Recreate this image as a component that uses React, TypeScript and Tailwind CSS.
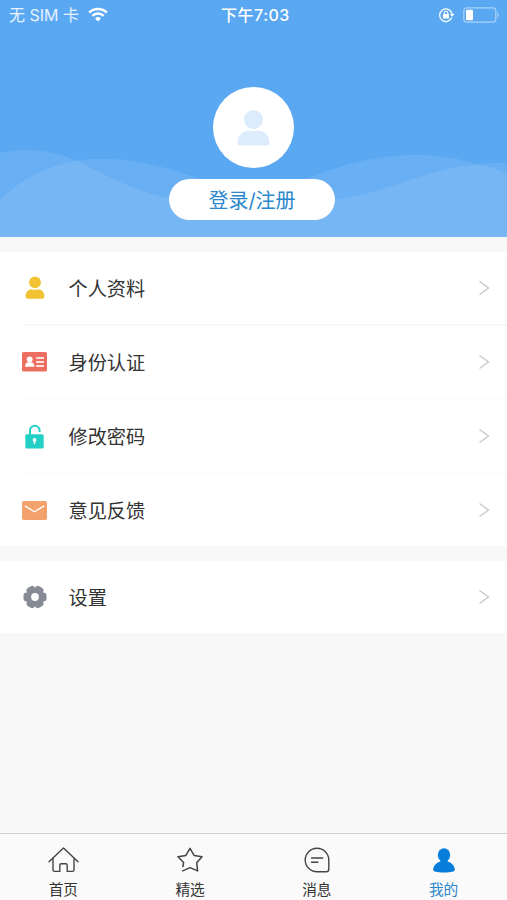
import type { ReactNode } from "react";

const PersonIcon = () => (
  <svg width="20" height="24" viewBox="0 0 20 24" fill="#f1c232">
    <circle cx="10" cy="6.4" r="5.9" />
    <path d="M.6 20.5c0-4.3 2.8-7.3 6-7.3 1.2.7 5.4.7 6.8 0 3.2 0 6 3 6 7.3 0 1.3-.9 2.2-2.2 2.2H2.8C1.5 22.7.6 21.8.6 20.5z" />
  </svg>
);

const IdCardIcon = () => (
  <svg width="25" height="20" viewBox="0 0 25 20">
    <rect width="25" height="19.5" rx="1.5" fill="#ec6f62" />
    <g fill="#fff">
      <circle cx="7.7" cy="7.3" r="2.9" />
      <path d="M3 14.8c0-3 1.6-4.600 3.200-4.600h3c1.600 0 3.200 1.600 3.200 4.600z" />
    </g>
    <path d="M14.2 6h7.8M14.2 10h7.8M14.2 14h7.8" stroke="#fde3df" strokeWidth="1.8" />
  </svg>
);

const LockIcon = () => (
  <svg width="19" height="25" viewBox="0 0 19 25">
    <path d="M5 11V6.5a4.8 4.8 0 0 1 9.6 0V8" fill="none" stroke="#23d0c6" strokeWidth="2" />
    <rect x=".3" y="10.3" width="18.4" height="14.2" rx="1.5" fill="#23d0c6" />
    <circle cx="9.5" cy="16" r="1.9" fill="#fff" />
    <path d="M9.5 16v4.2" stroke="#fff" strokeWidth="1.5" />
  </svg>
);

const MailIcon = () => (
  <svg width="25" height="19" viewBox="0 0 25 19">
    <rect width="25" height="19" rx="1.8" fill="#f4a26c" />
    <path d="M2.8 4.8l9.7 6 9.7-6" fill="none" stroke="#fff" strokeWidth="1.4" />
  </svg>
);

const GearIcon = () => (
  <svg width="24" height="24" viewBox="0 0 24 24" fill="#868a95">
    <circle cx="12" cy="12" r="9.3" />
    <rect x=".5" y="7.5" width="23" height="9" rx="3.2" />
    <rect x=".5" y="7.5" width="23" height="9" rx="3.2" transform="rotate(60 12 12)" />
    <rect x=".5" y="7.5" width="23" height="9" rx="3.2" transform="rotate(120 12 12)" />
    <circle cx="12" cy="12" r="3.9" fill="#fff" />
  </svg>
);

const HomeIcon = () => (
  <svg width="31" height="26" viewBox="0 0 31 26" fill="none" stroke="#444" strokeWidth="1.4" strokeLinecap="round" strokeLinejoin="round">
    <path d="M1 14.8L15.5 1 30 14.8" />
    <path d="M5 11.5v11.3q0 1.6 1.6 1.6h5.2v-6.2q0-1.5 1.5-1.5h4.4q1.5 0 1.5 1.5v6.2h5.2q1.6 0 1.6-1.6V11.5" />
  </svg>
);

const StarIcon = () => (
  <svg width="26" height="26" viewBox="0 0 26 26" fill="none" stroke="#444" strokeWidth="1.5" strokeLinecap="round" strokeLinejoin="round">
    <path d="M5.9 19.5l.7-4L1 9.8l7.9-1.4L13 1.3l4.1 7.1L25 9.8l-5.300 5.900.9 8.200-7.600-3.300-7.200 3.300" />
  </svg>
);

const MessageIcon = () => (
  <svg width="26" height="26" viewBox="0 0 26 26" fill="none" stroke="#444" strokeWidth="1.4" strokeLinecap="round">
    <path d="M13 1.2a11.8 11.8 0 0 0 0 23.6h9.3q2.5 0 2.5-2.5V13A11.8 11.8 0 0 0 13 1.2z" />
    <path d="M7.5 11h11.3M7.5 15.2h6.3" />
  </svg>
);

const MeIcon = () => (
  <svg width="22" height="25" viewBox="0 0 22 25" fill="#087edb">
    <ellipse cx="11" cy="7" rx="6.2" ry="6.7" />
    <path d="M7.5 11h7l.3 2.5c4 1.3 7 4.6 7 8.2 0 2-3.5 2.7-10.8 2.7S.2 23.7.2 21.7c0-3.6 3-6.9 7-8.2z" />
  </svg>
);

const mainItems = [
  { label: "个人资料", icon: <PersonIcon /> },
  { label: "身份认证", icon: <IdCardIcon /> },
  { label: "修改密码", icon: <LockIcon /> },
  { label: "意见反馈", icon: <MailIcon /> },
];

const tabs = [
  { label: "首页", icon: <HomeIcon /> },
  { label: "精选", icon: <StarIcon /> },
  { label: "消息", icon: <MessageIcon /> },
  { label: "我的", icon: <MeIcon />, active: true },
];

function MenuRow({ label, icon }: { label: string; icon: ReactNode }) {
  return (
    <div className="flex h-[72px] items-center pr-[17px] pl-[22px]">
      <div className="flex w-[25px] justify-center">{icon}</div>
      <span className="ml-[21.5px] flex-1 pt-[3px] text-[19.2px] leading-none text-[#333]">{label}</span>
      <svg width="12" height="16" viewBox="0 0 12 16" fill="none" stroke="#c8c8cc" strokeWidth="1.4">
        <path d="M1.5 1.5L10.5 8l-9 6.5" />
      </svg>
    </div>
  );
}

function StatusBar() {
  return (
    <div className="grid h-[30px] grid-cols-3 items-center pr-[7px] pl-[9px] text-white">
      <div className="flex items-center text-[16px] leading-none text-white/85">
        <span className="whitespace-nowrap">无 SIM 卡</span>
        <svg className="-mt-0.5 ml-[9px]" width="20" height="15" viewBox="0 0 20 15" fill="none" stroke="#fff" strokeWidth="2.5">
          <path d="M1.2 5.5a12.5 12.5 0 0 1 17.6 0M4.4 8.9a8 8 0 0 1 11.2 0" />
          <path d="M10 14.5l-3-3a4.3 4.3 0 0 1 6 0z" fill="#fff" stroke="none" />
        </svg>
      </div>
      <span className="pl-0.5 text-center text-[16px] leading-none font-medium tracking-[0.5px] whitespace-nowrap">下午7:03</span>
      <div className="flex items-center justify-end gap-2">
        <svg width="17" height="16" viewBox="0 0 17 16">
          <path d="M13.8 10.5A6.3 6.3 0 1 1 14 6.5" fill="none" stroke="#fff" strokeWidth="1.3" />
          <path d="M11.8 6.8h4.6l-2.2 3z" fill="#fff" />
          <rect x="5" y="7" width="6" height="4.5" rx=".6" fill="#fff" />
          <path d="M6.2 7.500V6a1.800 1.800 0 0 1 3.600 0v1.500" fill="none" stroke="#fff" strokeWidth="1.1" />
        </svg>
        <svg width="37" height="16" viewBox="0 0 37 16">
          <rect x=".8" y=".8" width="32" height="14.4" rx="3" fill="none" stroke="#a9d3fb" strokeWidth="1.2" />
          <rect x="3" y="2.8" width="7" height="10.4" rx="1.2" fill="#fff" />
          <path d="M34.3 5q3 3 0 6z" fill="#a9d3fb" />
        </svg>
      </div>
    </div>
  );
}

export default function App() {
  return (
    <div className="flex h-[900px] w-[507px] flex-col overflow-hidden bg-[#f8f8f8] font-['Inter','Noto_Sans_CJK_SC',sans-serif]">
      <header className="relative h-[237px] bg-[#5ba8f2]">
        <svg className="absolute inset-0" width="507" height="237" viewBox="0 0 507 237" fill="#fff" fillOpacity=".09">
          <path d="M0 153C28 147 57 150 85 165C119 182 143 194 173 199C230 210 294 208 345 198C405 187 436 162 507 163V237H0z" />
          <path d="M0 200C42 159 93 153 144 163C182 170 206 185 250 189C290 187 311 176 340 167C382 153 438 150 478 165C488 166 498 169 507 174V237H0z" />
        </svg>
        <div className="relative">
          <StatusBar />
          <div className="flex flex-col items-center pt-[57px]">
            <div className="flex size-[81px] items-center justify-center rounded-full bg-white">
              <svg width="33" height="36" viewBox="0 0 33 36" fill="#dcecfc">
                <circle cx="16.5" cy="9.5" r="9.5" />
                <path d="M.5 33C.5 25 6 21 12 20.5q4.5 1 9 0C27 21 32.5 25 32.5 33q0 2.5-2.5 2.5H3Q.5 35.5.5 33z" />
              </svg>
            </div>
            <button className="mt-[11px] mr-[3px] h-[41px] w-[166px] rounded-full bg-white pt-0.5 text-[20px] leading-none text-[#2b87cd]">登录/注册</button>
          </div>
        </div>
      </header>

      <section className="mt-[15px] bg-white">
        {mainItems.map((item, i) => (
          <div key={item.label}>
            {i > 0 && <div className={i === 1 ? "ml-6 h-[2px] bg-[#f7f7f7]" : "ml-6 h-[2px] bg-[#fcfcfc]"} />}
            <MenuRow {...item} />
          </div>
        ))}
      </section>

      <section className="mt-[15px] bg-white">
        <MenuRow label="设置" icon={<GearIcon />} />
      </section>

      <nav className="mt-auto grid h-[67px] grid-cols-4 border-t border-[#cfcfcf] bg-[#fafafa]">
        {tabs.map((tab) => (
          <div key={tab.label} className="flex flex-col items-center pt-[13px]">
            <div className="flex h-[26px] items-center">{tab.icon}</div>
            <span className={`mt-[10px] text-[14.7px] leading-none ${tab.active ? "text-[#2b87cd]" : "text-[#333]"}`}>
              {tab.label}
            </span>
          </div>
        ))}
      </nav>
    </div>
  );
}
